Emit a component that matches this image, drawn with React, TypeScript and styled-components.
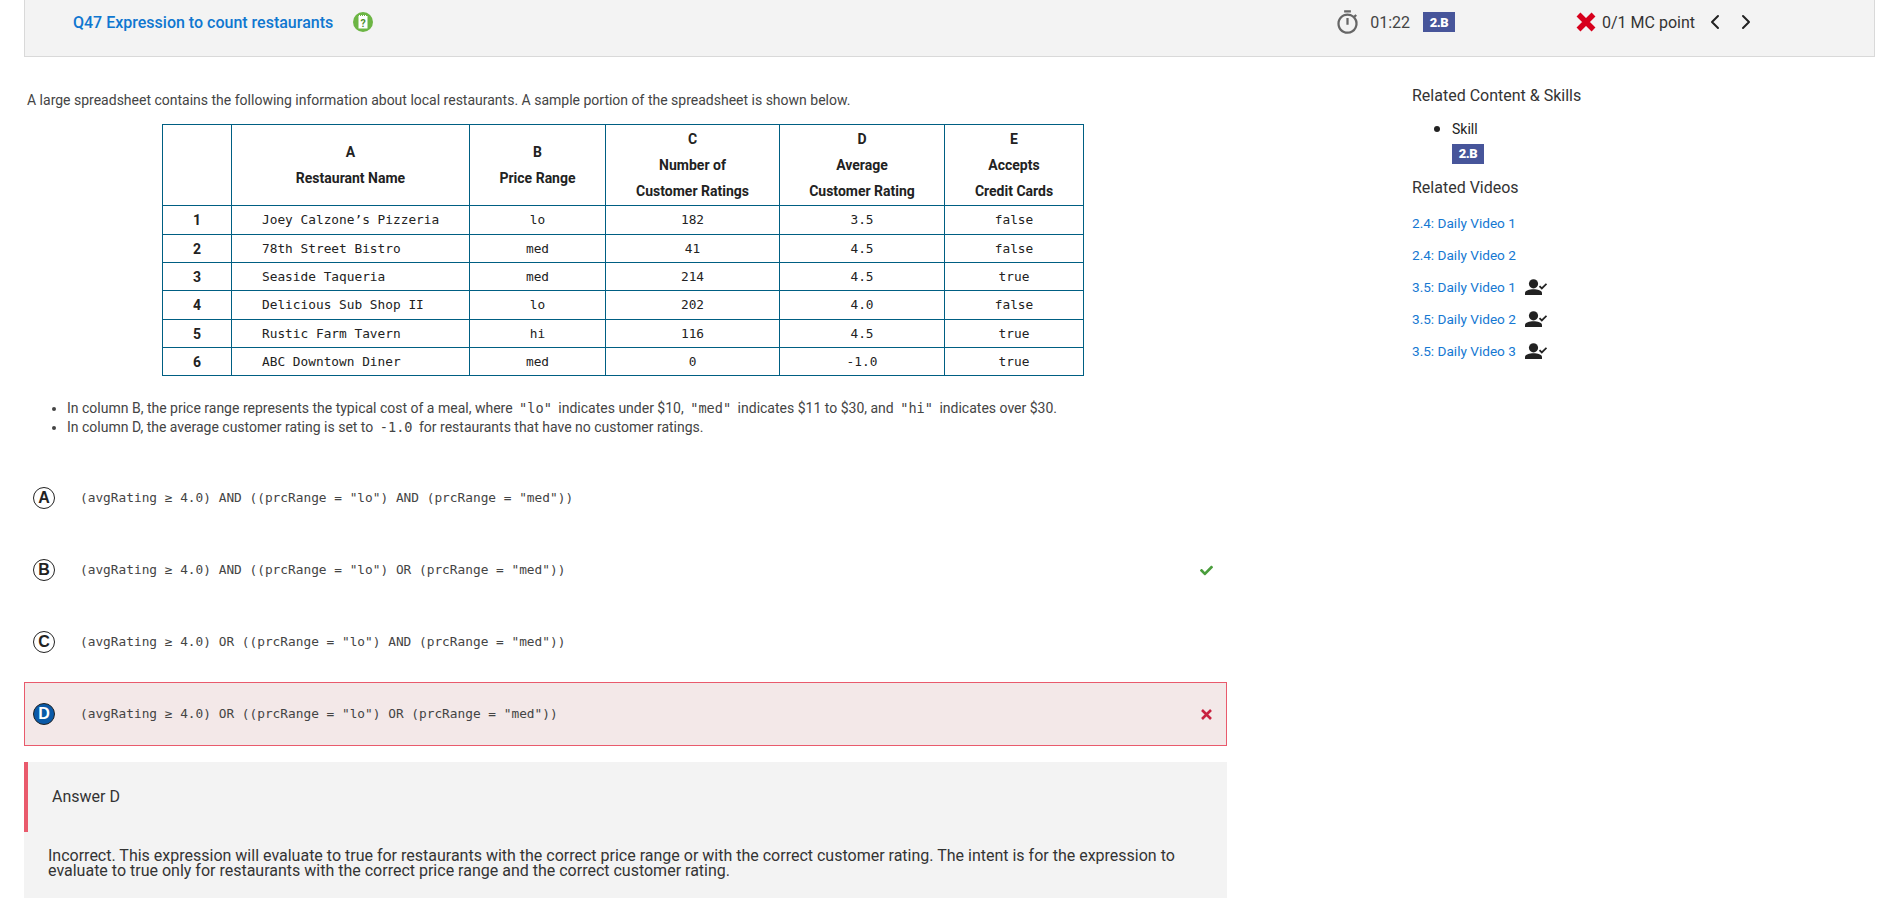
import React from 'react';
import styled, { createGlobalStyle } from 'styled-components';
import { FaCheck } from 'react-icons/fa';
import { MdOutlineTimer } from 'react-icons/md';
import { ChevronLeft, ChevronRight } from 'lucide-react';

const GlobalStyle = createGlobalStyle`
  html, body {
    margin: 0;
    height: 100%;
    overflow: hidden;
    background: #fff;
  }
  body {
    font-family: Roboto, "Liberation Sans", sans-serif;
    color: #333;
  }
`;

const mono = `"DejaVu Sans Mono", "Liberation Mono", monospace`;

const Header = styled.header`
  display: flex;
  align-items: center;
  box-sizing: border-box;
  height: 57px;
  width: 1851px;
  margin-left: 24px;
  padding: 0 116px 12px 48px;
  background: #f3f3f3;
  border: solid 1px #d9d9d9;
  border-top: 0;
`;

const Title = styled.a`
  font-size: 16px;
  font-weight: 500;
  color: #0f77d0;
`;

const HelpIcon = styled.svg`
  width: 20px;
  height: 20px;
  margin-left: 20px;
`;

const TimerGroup = styled.div`
  display: flex;
  align-items: center;
  margin-left: auto;
  color: #444;
  font-size: 16px;
`;

const TimerIcon = styled(MdOutlineTimer)`
  width: 27px;
  height: 27px;
  color: #666;
  margin-right: 9px;
`;

const Badge = styled.span`
  display: inline-flex;
  align-items: center;
  justify-content: center;
  width: 32px;
  height: 20px;
  background: #47559a;
  color: #fff;
  font-size: 13px;
  font-weight: 900;
  letter-spacing: -0.5px;
`;

const TimerBadge = styled(Badge)`
  margin-left: 13px;
`;

const ScoreGroup = styled.div`
  display: flex;
  align-items: center;
  margin-left: 121px;
  color: #333;
  font-size: 16px;
`;

const BigCross = styled.svg`
  width: 20px;
  height: 20px;
  margin-right: 6px;
`;

const NavLeft = styled(ChevronLeft)`
  margin-left: 8px;
  color: #222;
`;

const NavRight = styled(ChevronRight)`
  margin-left: 7px;
  color: #222;
`;

const Body = styled.div`
  display: flex;
  align-items: flex-start;
`;

const Main = styled.main`
  width: 1203px;
  margin-left: 24px;
  flex: none;
`;

const Intro = styled.p`
  margin: 33px 0 14px 3px;
  font-size: 14px;
  line-height: 20px;
  color: #444;
`;

const Table = styled.table`
  border-collapse: collapse;
  table-layout: fixed;
  width: 921px;
  margin-left: 138px;
`;

// rows alternate 29/28/28 in the picture
const Row = styled.tr`
  &:nth-child(3n + 1) td {
    height: 27px;
    padding-bottom: 1px;
  }
`;

const Cell = styled.td`
  border: solid 1px #005f83;
  height: 27px;
  padding: 0;
  text-align: center;
  font-family: ${mono};
  font-size: 12.8px;
  color: #222;
`;

const NameCell = styled(Cell)`
  text-align: left;
  padding-left: 30px;
`;

const NumCell = styled(Cell)`
  font-family: Roboto, sans-serif;
  font-size: 14px;
  font-weight: 700;
`;

const HeadCell = styled.th`
  border: solid 1px #005f83;
  padding: 0;
  height: 80px;
  font-size: 14px;
  font-weight: 700;
  line-height: 26px;
  color: #222;
`;

const HeadLine = styled.div``;

const Notes = styled.ul`
  margin: 23px 0 29px;
  padding-left: 43px;
  font-size: 14px;
  line-height: 19px;
  color: #444;
`;

const Code = styled.code`
  font-family: ${mono};
  font-size: 13.6px;
  padding: 0 3px;
`;

const Option = styled.div<{ $wrong?: boolean }>`
  display: flex;
  align-items: center;
  box-sizing: border-box;
  height: 64px;
  margin-bottom: 8px;
  padding: 0 13px 0 8px;
  border: solid 1px ${(p) => (p.$wrong ? '#e95a6c' : 'transparent')};
  background: ${(p) => (p.$wrong ? '#f3e8e8' : 'transparent')};
`;

const Letter = styled.span<{ $picked?: boolean }>`
  display: flex;
  align-items: center;
  justify-content: center;
  box-sizing: border-box;
  flex: none;
  width: 22px;
  height: 22px;
  border-radius: 50%;
  border: solid 1.5px #222;
  background: ${(p) => (p.$picked ? '#0a5aa8' : '#fff')};
  color: ${(p) => (p.$picked ? '#fff' : '#222')};
  font-family: "Liberation Sans", sans-serif;
  font-size: 16px;
  font-weight: 700;
`;

const Expression = styled.span`
  margin: 0 0 2px 25px;
  font-family: ${mono};
  font-size: 12.8px;
  color: #444;
`;

const Tick = styled(FaCheck)`
  margin-left: auto;
  width: 13px;
  height: 13px;
  color: #4a9d3c;
`;

const SmallCross = styled.svg`
  margin-left: auto;
  width: 13px;
  height: 13px;
`;

const Answer = styled.section`
  margin-top: 16px;
  background: #f3f3f3;
  padding-bottom: 40px;
`;

const AnswerHead = styled.div`
  display: flex;
  align-items: center;
  box-sizing: border-box;
  height: 70px;
  padding: 0 0 1px 24px;
  border-left: solid 4px #e95a6c;
  font-size: 16px;
  color: #333;
`;

const Explanation = styled.p`
  margin: 16px 0 0;
  padding: 0 24px;
  font-size: 16px;
  line-height: 15px;
  color: #333;
`;

const Side = styled.aside`
  margin-left: 185px;
  padding-top: 29px;
`;

const SideTitle = styled.h3`
  margin: 0;
  font-size: 16px;
  font-weight: 400;
  line-height: 20px;
  color: #333;
`;

const SkillList = styled.ul`
  margin: 12px 0 14px;
  padding-left: 40px;
  font-size: 14px;
  line-height: 20px;
  color: #222;
  li::marker {
    font-size: 18px;
  }
`;

const SkillBadge = styled(Badge)`
  display: flex;
  margin-top: 5px;
`;

const Videos = styled.div`
  display: flex;
  flex-direction: column;
  margin-top: 9px;
`;

const VideoRow = styled.div`
  display: flex;
  align-items: center;
  height: 32px;
`;

const VideoLink = styled.a`
  font-size: 13.6px;
  color: #1578d2;
`;

const WatchedIcon = styled.svg`
  width: 22px;
  height: 16px;
  margin-left: 9px;
`;

const headers = [
  ['A', 'Restaurant Name'],
  ['B', 'Price Range'],
  ['C', 'Number of', 'Customer Ratings'],
  ['D', 'Average', 'Customer Rating'],
  ['E', 'Accepts', 'Credit Cards'],
];

const rows = [
  ['Joey Calzone’s Pizzeria', 'lo', '182', '3.5', 'false'],
  ['78th Street Bistro', 'med', '41', '4.5', 'false'],
  ['Seaside Taqueria', 'med', '214', '4.5', 'true'],
  ['Delicious Sub Shop II', 'lo', '202', '4.0', 'false'],
  ['Rustic Farm Tavern', 'hi', '116', '4.5', 'true'],
  ['ABC Downtown Diner', 'med', '0', '-1.0', 'true'],
];

const widths = [69, 238, 136, 174, 165, 139];

const options = [
  { letter: 'A', text: '(avgRating ≥ 4.0) AND ((prcRange = "lo") AND (prcRange = "med"))' },
  { letter: 'B', text: '(avgRating ≥ 4.0) AND ((prcRange = "lo") OR (prcRange = "med"))', correct: true },
  { letter: 'C', text: '(avgRating ≥ 4.0) OR ((prcRange = "lo") AND (prcRange = "med"))' },
  { letter: 'D', text: '(avgRating ≥ 4.0) OR ((prcRange = "lo") OR (prcRange = "med"))', wrong: true },
];

const videos = [
  { name: '2.4: Daily Video 1' },
  { name: '2.4: Daily Video 2' },
  { name: '3.5: Daily Video 1', watched: true },
  { name: '3.5: Daily Video 2', watched: true },
  { name: '3.5: Daily Video 3', watched: true },
];

export default function App() {
  return (
    <>
      <GlobalStyle />
      <Header>
        <Title>Q47 Expression to count restaurants</Title>
        <HelpIcon viewBox="0 0 20 20">
          <circle cx="10" cy="10" r="10" fill="#6cb544" />
          <rect x="5.5" y="4" width="9" height="12.5" fill="#fff" />
          <path d="M6.5 3v2M8.5 3v2M10.5 3v2M12.5 3v2" stroke="#fff" strokeWidth="1" />
          <text x="10" y="14.5" textAnchor="middle" fontSize="10.5" fontWeight="700" fontFamily="Roboto" fill="#4d8f2c">?</text>
        </HelpIcon>
        <TimerGroup>
          <TimerIcon />
          01:22
          <TimerBadge>2.B</TimerBadge>
        </TimerGroup>
        <ScoreGroup>
          <BigCross viewBox="0 0 20 20">
            <path d="M2.5 2.5l15 15M17.5 2.5l-15 15" stroke="#d7001c" strokeWidth="5.5" fill="none" />
          </BigCross>
          0/1 MC point
          <NavLeft size={24} strokeWidth={2} />
          <NavRight size={24} strokeWidth={2} />
        </ScoreGroup>
      </Header>
      <Body>
        <Main>
          <Intro>
            A large spreadsheet contains the following information about local restaurants. A sample portion of the spreadsheet is shown below.
          </Intro>
          <Table>
            <colgroup>
              {widths.map((w, i) => (
                <col key={i} width={w} />
              ))}
            </colgroup>
            <thead>
              <tr>
                <HeadCell />
                {headers.map((lines) => (
                  <HeadCell key={lines[0]}>
                    {lines.map((line) => (
                      <HeadLine key={line}>{line}</HeadLine>
                    ))}
                  </HeadCell>
                ))}
              </tr>
            </thead>
            <tbody>
              {rows.map((row, i) => (
                <Row key={row[0]}>
                  <NumCell>{i + 1}</NumCell>
                  <NameCell>{row[0]}</NameCell>
                  {row.slice(1).map((value, j) => (
                    <Cell key={j}>{value}</Cell>
                  ))}
                </Row>
              ))}
            </tbody>
          </Table>
          <Notes>
            <li>
              In column B, the price range represents the typical cost of a meal, where <Code>"lo"</Code> indicates under $10, <Code>"med"</Code> indicates $11 to $30, and <Code>"hi"</Code> indicates over $30.
            </li>
            <li>
              In column D, the average customer rating is set to <Code>-1.0</Code> for restaurants that have no customer ratings.
            </li>
          </Notes>
          {options.map((o) => (
            <Option key={o.letter} $wrong={o.wrong}>
              <Letter $picked={o.wrong}>{o.letter}</Letter>
              <Expression>{o.text}</Expression>
              {o.correct && <Tick />}
              {o.wrong && (
                <SmallCross viewBox="0 0 13 13">
                  <path d="M2 2l9 9M11 2l-9 9" stroke="#c8213f" strokeWidth="2.6" fill="none" />
                </SmallCross>
              )}
            </Option>
          ))}
          <Answer>
            <AnswerHead>Answer D</AnswerHead>
            <Explanation>
              Incorrect. This expression will evaluate to true for restaurants with the correct price range or with the correct customer rating. The intent is for the expression to evaluate to true only for restaurants with the correct price range and the correct customer rating.
            </Explanation>
          </Answer>
        </Main>
        <Side>
          <SideTitle>Related Content &amp; Skills</SideTitle>
          <SkillList>
            <li>
              Skill
              <SkillBadge>2.B</SkillBadge>
            </li>
          </SkillList>
          <SideTitle>Related Videos</SideTitle>
          <Videos>
            {videos.map((v) => (
              <VideoRow key={v.name}>
                <VideoLink>{v.name}</VideoLink>
                {v.watched && (
                  <WatchedIcon viewBox="0 0 22 16">
                    <circle cx="8.5" cy="4.8" r="4.6" fill="#222" />
                    <path d="M0 16v-2c0-2.6 4.5-3.8 8.5-3.8s8.5 1.2 8.5 3.8v2z" fill="#222" />
                    <path d="M14.5 7.2l2.3 2.3L21.5 4.8" stroke="#222" strokeWidth="1.8" fill="none" />
                  </WatchedIcon>
                )}
              </VideoRow>
            ))}
          </Videos>
        </Side>
      </Body>
    </>
  );
}
